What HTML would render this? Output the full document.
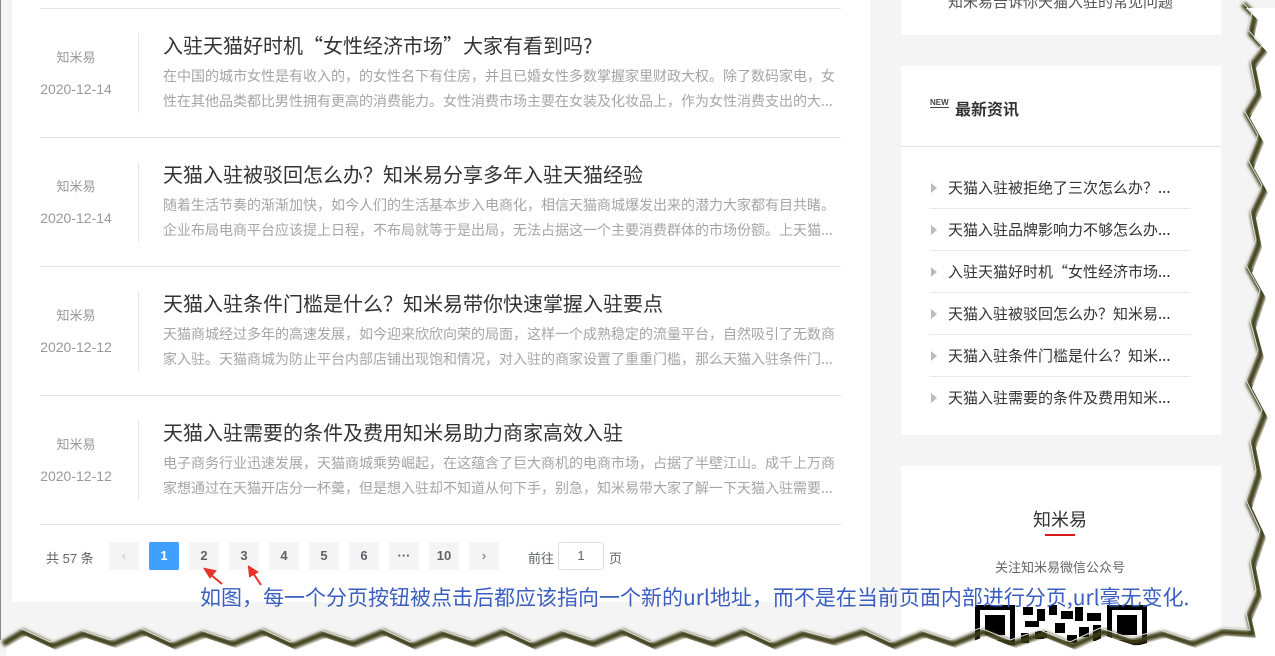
<!DOCTYPE html>
<html><head><meta charset="utf-8"><style>
*{margin:0;padding:0;box-sizing:border-box}
body{width:1275px;height:656px;overflow:hidden;background:#f4f4f4;font-family:"Liberation Sans","Noto Sans CJK SC",sans-serif;position:relative}
.abs{position:absolute}
.main{left:12px;top:0;width:858px;height:602px;background:#fff}
.sep{position:absolute;left:40px;width:801px;height:1px;background:#e4e4e4}
.au{position:absolute;width:100px;left:26px;text-align:center;color:#999;font-size:13px}
.dt{position:absolute;width:110px;left:21px;text-align:center;color:#999;font-size:14px}
.vl{position:absolute;left:138px;width:1px;height:80px;background:#e6e6e6}
.tt{position:absolute;left:163px;font-size:20px;color:#333;white-space:nowrap;font-family:"Noto Sans CJK SC",sans-serif;line-height:26px}
.ds{position:absolute;left:163px;width:674px;font-size:14px;color:#a5a5a5;line-height:25px;height:50px;overflow:hidden;font-family:"Noto Sans CJK SC",sans-serif}
.pg{position:absolute;top:542px;width:30px;height:28px;background:#f4f4f5;color:#606266;font-size:13px;font-weight:bold;text-align:center;line-height:28px;border-radius:2px}
.side{background:#fff;left:901px;width:320px}
.li{position:absolute;left:948px;font-size:15px;color:#333;white-space:nowrap;font-family:"Noto Sans CJK SC",sans-serif;line-height:20px}
.tri{position:absolute;left:931px;width:0;height:0;border-left:6px solid #bbb;border-top:5px solid transparent;border-bottom:5px solid transparent}
.ls{position:absolute;left:930px;width:260px;height:1px;background:#e8e8e8}
</style></head><body>
<div class="abs main"></div>
<div class="sep" style="top:8px"></div>
<div class="sep" style="top:137px"></div>
<div class="sep" style="top:266px"></div>
<div class="sep" style="top:395px"></div>
<div class="sep" style="top:524px"></div>

<div class="au" style="top:47px">知米易</div><div class="dt" style="top:81px">2020-12-14</div><div class="vl" style="top:33px"></div>
<div class="tt" style="top:32px">入驻天猫好时机“女性经济市场”大家有看到吗?</div>
<div class="ds" style="top:64px">在中国的城市女性是有收入的，的女性名下有住房，并且已婚女性多数掌握家里财政大权。除了数码家电，女性在其他品类都比男性拥有更高的消费能力。女性消费市场主要在女装及化妆品上，作为女性消费支出的大...</div>

<div class="au" style="top:176px">知米易</div><div class="dt" style="top:210px">2020-12-14</div><div class="vl" style="top:162px"></div>
<div class="tt" style="top:161px">天猫入驻被驳回怎么办？知米易分享多年入驻天猫经验</div>
<div class="ds" style="top:193px">随着生活节奏的渐渐加快，如今人们的生活基本步入电商化，相信天猫商城爆发出来的潜力大家都有目共睹。企业布局电商平台应该提上日程，不布局就等于是出局，无法占据这一个主要消费群体的市场份额。上天猫...</div>

<div class="au" style="top:305px">知米易</div><div class="dt" style="top:339px">2020-12-12</div><div class="vl" style="top:291px"></div>
<div class="tt" style="top:290px">天猫入驻条件门槛是什么？知米易带你快速掌握入驻要点</div>
<div class="ds" style="top:322px">天猫商城经过多年的高速发展，如今迎来欣欣向荣的局面，这样一个成熟稳定的流量平台，自然吸引了无数商家入驻。天猫商城为防止平台内部店铺出现饱和情况，对入驻的商家设置了重重门槛，那么天猫入驻条件门...</div>

<div class="au" style="top:434px">知米易</div><div class="dt" style="top:468px">2020-12-12</div><div class="vl" style="top:420px"></div>
<div class="tt" style="top:419px">天猫入驻需要的条件及费用知米易助力商家高效入驻</div>
<div class="ds" style="top:451px">电子商务行业迅速发展，天猫商城乘势崛起，在这蕴含了巨大商机的电商市场，占据了半壁江山。成千上万商家想通过在天猫开店分一杯羹，但是想入驻却不知道从何下手，别急，知米易带大家了解一下天猫入驻需要...</div>

<div class="abs" style="left:46px;top:548px;font-size:13px;color:#606266">共 57 条</div>
<div class="pg" style="left:109px;color:#c0c4cc;font-weight:normal">‹</div>
<div class="pg" style="left:149px;background:#409eff;color:#fff">1</div>
<div class="pg" style="left:189px">2</div>
<div class="pg" style="left:229px">3</div>
<div class="pg" style="left:269px">4</div>
<div class="pg" style="left:309px">5</div>
<div class="pg" style="left:349px">6</div>
<div class="pg" style="left:389px">···</div>
<div class="pg" style="left:429px">10</div>
<div class="pg" style="left:469px;font-weight:normal">›</div>
<div class="abs" style="left:528px;top:548px;font-size:13px;color:#606266">前往</div>
<div class="abs" style="left:558px;top:542px;width:46px;height:28px;border:1px solid #dcdfe6;border-radius:3px;text-align:center;line-height:26px;font-size:13px;color:#606266">1</div>
<div class="abs" style="left:609px;top:548px;font-size:13px;color:#606266">页</div>

<svg class="abs" style="left:0;top:0" width="300" height="600"><g fill="#e8322a" stroke="#e8322a" stroke-width="2"><line x1="222" y1="584" x2="210" y2="574"/><polygon points="205,569 215,571 210,577"/><line x1="261" y1="585" x2="253" y2="573"/><polygon points="249,567 257,572 250,576"/></g></svg>
<div class="abs" style="left:200px;top:583px;font-size:21px;color:#3b5fc0;white-space:nowrap;z-index:3;font-family:'Noto Sans CJK SC',sans-serif;line-height:28px">如图，每一个分页按钮被点击后都应该指向一个新的url地址，而不是在当前页面内部进行分页,url毫无变化.</div>

<div class="abs side" style="top:0;height:35px"></div>
<div class="li" style="top:-8px;color:#555">知米易告诉你天猫入驻的常见问题</div>
<div class="abs side" style="top:66px;height:369px"></div>
<div class="abs" style="left:930px;top:99px;font-size:8px;font-weight:bold;color:#444;border-bottom:1px solid #444;line-height:8px">NEW</div>
<div class="abs" style="left:955px;top:96px;font-size:16px;font-weight:bold;color:#333">最新资讯</div>
<div class="abs" style="left:901px;top:146px;width:320px;height:1px;background:#e4e4e4"></div>
<div class="tri" style="top:183px"></div><div class="li" style="top:178px">天猫入驻被拒绝了三次怎么办？...</div><div class="ls" style="top:208px"></div>
<div class="tri" style="top:225px"></div><div class="li" style="top:220px">天猫入驻品牌影响力不够怎么办...</div><div class="ls" style="top:250px"></div>
<div class="tri" style="top:267px"></div><div class="li" style="top:262px">入驻天猫好时机“女性经济市场...</div><div class="ls" style="top:292px"></div>
<div class="tri" style="top:309px"></div><div class="li" style="top:304px">天猫入驻被驳回怎么办？知米易...</div><div class="ls" style="top:334px"></div>
<div class="tri" style="top:351px"></div><div class="li" style="top:346px">天猫入驻条件门槛是什么？知米...</div><div class="ls" style="top:376px"></div>
<div class="tri" style="top:393px"></div><div class="li" style="top:388px">天猫入驻需要的条件及费用知米...</div>
<div class="abs side" style="top:466px;height:190px"></div>
<div class="abs" style="left:1000px;width:120px;top:506px;text-align:center;font-size:18px;color:#333">知米易</div>
<div class="abs" style="left:1045px;top:534px;width:30px;height:2px;background:#d9181e"></div>
<div class="abs" style="left:960px;width:200px;top:557px;text-align:center;font-size:13px;color:#666">关注知米易微信公众号</div>
<svg class="abs" style="left:975px;top:605px" width="172" height="40"><g fill="#000"><rect x="0" y="0" width="40" height="40"/><rect x="5" y="5" width="30" height="30" fill="#fff"/><rect x="10" y="10" width="20" height="20"/><rect x="132" y="0" width="40" height="40"/><rect x="137" y="5" width="30" height="30" fill="#fff"/><rect x="142" y="10" width="20" height="20"/><rect x="48" y="2" width="10" height="8"/><rect x="62" y="4" width="8" height="12"/><rect x="50" y="16" width="14" height="6"/><rect x="74" y="0" width="8" height="10"/><rect x="86" y="6" width="12" height="8"/><rect x="80" y="18" width="10" height="10"/><rect x="100" y="2" width="8" height="14"/><rect x="112" y="8" width="14" height="8"/><rect x="104" y="22" width="10" height="10"/><rect x="118" y="20" width="8" height="16"/><rect x="46" y="28" width="8" height="10"/><rect x="60" y="26" width="12" height="8"/><rect x="92" y="30" width="10" height="8"/></g></svg>

<svg class="abs" style="left:0;top:0;z-index:5" width="1275" height="656">
<defs><filter id="b"><feGaussianBlur stdDeviation="1.5"/></filter>
<path id="e" d="M1240,0 L1252,12 L1248,30 L1262,45 L1250,60 L1256,90 L1244,110 L1258,135 L1248,160 L1262,185 L1250,210 L1256,240 L1246,265 L1260,290 L1250,320 L1258,350 L1246,380 L1262,410 L1250,440 L1256,470 L1246,500 L1260,530 L1250,560 L1256,590 L1246,612 L1250,630 L1220,628 L1190,640 L1160,630 L1130,638 L1100,628 L1070,642 L1040,630 L1010,640 L980,628 L950,640 L920,630 L890,642 L860,628 L830,638 L800,630 L770,642 L740,628 L710,640 L680,630 L650,642 L620,628 L590,640 L560,630 L530,642 L500,628 L470,640 L440,630 L410,642 L380,628 L350,640 L320,630 L290,642 L260,628 L230,640 L200,630 L170,642 L140,628 L110,640 L80,630 L50,642 L20,628 L0,640"/></defs>
<use href="#e" fill="none" stroke="#3c3c12" stroke-width="6" filter="url(#b)" transform="translate(3,4)"/>
<path d="M1240,0 L1252,12 L1248,30 L1262,45 L1250,60 L1256,90 L1244,110 L1258,135 L1248,160 L1262,185 L1250,210 L1256,240 L1246,265 L1260,290 L1250,320 L1258,350 L1246,380 L1262,410 L1250,440 L1256,470 L1246,500 L1260,530 L1250,560 L1256,590 L1246,612 L1250,630 L1220,628 L1190,640 L1160,630 L1130,638 L1100,628 L1070,642 L1040,630 L1010,640 L980,628 L950,640 L920,630 L890,642 L860,628 L830,638 L800,630 L770,642 L740,628 L710,640 L680,630 L650,642 L620,628 L590,640 L560,630 L530,642 L500,628 L470,640 L440,630 L410,642 L380,628 L350,640 L320,630 L290,642 L260,628 L230,640 L200,630 L170,642 L140,628 L110,640 L80,630 L50,642 L20,628 L0,640 L0,656 L1275,656 L1275,0 Z" fill="#fff" transform="translate(6,8)"/>
<use href="#e" fill="none" stroke="#e0e0e0" stroke-width="1"/>
<rect x="0" y="0" width="1" height="640" fill="#888"/>
</svg>
</body></html>
